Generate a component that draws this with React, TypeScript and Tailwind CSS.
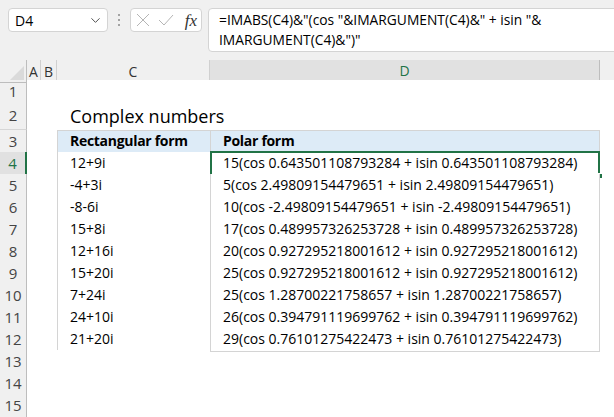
import React from "react";
import { ChevronDown } from "lucide-react";

const rows: [string, string][] = [
  ["12+9i", "15(cos 0.643501108793284 + isin 0.643501108793284)"],
  ["-4+3i", "5(cos 2.49809154479651 + isin 2.49809154479651)"],
  ["-8-6i", "10(cos -2.49809154479651 + isin -2.49809154479651)"],
  ["15+8i", "17(cos 0.489957326253728 + isin 0.489957326253728)"],
  ["12+16i", "20(cos 0.927295218001612 + isin 0.927295218001612)"],
  ["15+20i", "25(cos 0.927295218001612 + isin 0.927295218001612)"],
  ["7+24i", "25(cos 1.28700221758657 + isin 1.28700221758657)"],
  ["24+10i", "26(cos 0.394791119699762 + isin 0.394791119699762)"],
  ["21+20i", "29(cos 0.76101275422473 + isin 0.76101275422473)"],
];

const cols = "grid grid-cols-[27px_14px_16px_153px_390px_14px]";

function RowHead({ n, sel }: { n: number; sel?: boolean }) {
  return (
    <div
      className={
        sel
          ? "flex items-center justify-center bg-[#e1e1e1] border-b border-b-[#d6d6d6] border-r-2 border-r-[#217346] text-[#217346] text-[15px]"
          : "flex items-center justify-center bg-[#f0f0f0] border-b border-b-[#d6d6d6] border-r border-r-[#bdbdbd] text-[#444444] text-[15px]"
      }
    >
      {n}
    </div>
  );
}

export default function App() {
  return (
    <div className="w-[614px] h-[417px] overflow-hidden bg-[#f0f0f0] font-['Open_Sans',sans-serif] text-black">
      {/* formula bar */}
      <div className="flex items-start h-[60px] pt-2 pl-2 overflow-hidden">
        <div className="flex items-center justify-between w-[100px] h-[24px] bg-white border border-[#d4d4d4] rounded-[4px] pl-[6px] pr-[4px] text-[14px]">
          <span>D4</span>
          <ChevronDown size={15} strokeWidth={1.5} className="text-[#444]" />
        </div>
        <div className="flex flex-col items-center justify-center gap-[3px] w-[22px] h-[24px]">
          <span className="w-[2px] h-[2px] bg-[#8a8a8a] rounded-full" />
          <span className="w-[2px] h-[2px] bg-[#8a8a8a] rounded-full" />
          <span className="w-[2px] h-[2px] bg-[#8a8a8a] rounded-full" />
        </div>
        <div className="flex items-center w-[72px] h-[24px] bg-white border border-[#d4d4d4] rounded-[4px] pl-[5px] pr-[4px]">
          <svg width="14" height="14" viewBox="0 0 14 14" className="text-[#b5b5b5]">
            <path d="M1 1L13 13M13 1L1 13" stroke="currentColor" strokeWidth="1" fill="none" />
          </svg>
          <svg width="16" height="14" viewBox="0 0 16 14" className="ml-[8px] text-[#b5b5b5]">
            <path d="M1 7L6 12L15 2" stroke="currentColor" strokeWidth="1" fill="none" />
          </svg>
          <span className="ml-auto font-['Liberation_Serif',serif] italic text-[17px] text-[#333] leading-none">fx</span>
        </div>
        <div className="ml-[6px] flex-1 mr-[-12px] h-[44px] bg-white border border-[#d4d4d4] rounded-[4px] pl-[10px] pt-[1px] text-[13.8px] leading-[20px]">
          <div>=IMABS(C4)&amp;"(cos "&amp;IMARGUMENT(C4)&amp;" + isin "&amp;</div>
          <div>IMARGUMENT(C4)&amp;")"</div>
        </div>
      </div>

      {/* column headers */}
      <div className={`${cols} h-[20px] text-[14px] text-[#333]`}>
        <div className="relative border-r border-r-[#bdbdbd] border-b border-b-[#bdbdbd]">
          <div className="absolute right-[2px] bottom-[2px] w-0 h-0 border-l-[14px] border-l-transparent border-b-[14px] border-b-[#dadada]" />
        </div>
        <div className="flex items-center justify-center border-r border-r-[#d0d0d0] border-b border-b-[#bdbdbd]">A</div>
        <div className="flex items-center justify-center border-r border-r-[#d0d0d0] border-b border-b-[#bdbdbd]">B</div>
        <div className="flex items-center justify-center border-r border-r-[#d0d0d0] border-b border-b-[#bdbdbd]">C</div>
        <div className="flex items-center justify-center bg-[#e1e1e1] border-r border-r-[#bdbdbd] border-b-2 border-b-[#217346] text-[#217346]">D</div>
        <div className="border-b border-b-[#bdbdbd]" />
      </div>

      {/* row 1 */}
      <div className={`${cols} h-[22px]`}>
        <RowHead n={1} />
        <div className="col-span-5 bg-white" />
      </div>
      {/* row 2 */}
      <div className={`${cols} h-[28px]`}>
        <RowHead n={2} />
        <div className="col-span-2 bg-white" />
        <div className="col-span-3 bg-white flex items-end pl-[13px] pb-[2px] text-[18px] leading-[24px] whitespace-nowrap">
          Complex numbers
        </div>
      </div>
      {/* row 3 header */}
      <div className={`${cols} h-[22px] text-[14px]`}>
        <RowHead n={3} />
        <div className="col-span-2 bg-white" />
        <div className="bg-[#ddebf7] border border-[#d4d4d4] border-r-0 pl-[12px] font-bold leading-[20px] tracking-[-0.3px] whitespace-nowrap">
          Rectangular form
        </div>
        <div className="bg-[#ddebf7] border border-[#d4d4d4] pl-[12px] font-bold leading-[20px] tracking-[-0.3px] whitespace-nowrap">
          Polar form
        </div>
        <div className="bg-white" />
      </div>
      {rows.map(([c, d], i) => (
        <div key={i} className={`${cols} h-[22px] text-[14px]`}>
          <RowHead n={i + 4} sel={i === 0} />
          <div className="col-span-2 bg-white" />
          <div className="bg-white border-l border-b border-[#d4d4d4] pl-[12px] leading-[21px] whitespace-nowrap">{c}</div>
          <div className="relative bg-white border-l border-r border-b border-[#d4d4d4] pl-[12px] leading-[21px] whitespace-nowrap">
            {d}
            {i === 0 && (
              <>
                <div className="absolute left-[-1px] top-[-1px] right-[-1px] bottom-[-1px] border-2 border-[#217346]" />
                <div className="absolute right-[-4px] bottom-[-4px] w-[6px] h-[6px] bg-[#217346] border border-white" />
              </>
            )}
          </div>
          <div className="bg-white" />
        </div>
      ))}
      {[13, 14, 15].map((n) => (
        <div key={n} className={`${cols} h-[22px]`}>
          <RowHead n={n} />
          <div className="col-span-5 bg-white" />
        </div>
      ))}
    </div>
  );
}
